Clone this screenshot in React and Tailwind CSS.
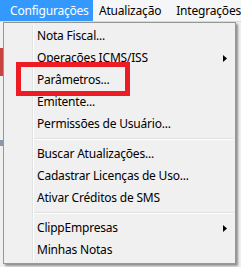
const items = [
  { label: "Nota Fiscal..." },
  { label: "Operações ICMS/ISS", sub: true },
  { label: "Parâmetros..." },
  { label: "Emitente..." },
  { label: "Permissões de Usuário..." },
  { sep: true },
  { label: "Buscar Atualizações..." },
  { label: "Cadastrar Licenças de Uso..." },
  { label: "Ativar Créditos de SMS" },
  { sep: true },
  { label: "ClippEmpresas", sub: true },
  { label: "Minhas Notas" },
];

const Arrow = () => (
  <svg width="4" height="7" viewBox="0 0 4 7" className="ml-auto mr-[8px]">
    <path d="M0 0 L4 3.5 L0 7 Z" fill="#000" />
  </svg>
);

export default function App() {
  return (
    <div
      className="relative w-[241px] h-[267px] overflow-hidden bg-[#f0f0f0] text-[12px] tracking-[-0.2px] text-black"
      style={{ fontFamily: '"Noto Sans", "Liberation Sans", sans-serif' }}
    >
      {/* menu bar */}
      <div className="flex h-[21px] items-center bg-[#f5f6f7]">
        <div className="flex h-full w-[95px] items-center bg-[#3399ff] pl-[10px] text-white">
          Configurações
        </div>
        <div className="pl-[6px]">Atualização</div>
        <div className="pl-[15px] whitespace-nowrap">Integrações</div>
      </div>
      <div className="h-px bg-[#d9d9d9]" />

      {/* window content peeking behind */}
      <div className="absolute left-0 top-[48px] h-[28px] w-[3px] bg-[#c8443f]" />
      <div className="absolute left-0 top-[140px] h-[6px] w-[3px] bg-[#8a99a8]" />

      {/* dropdown */}
      <div className="absolute left-[3px] top-[22px] w-[233px] border border-[#979797] bg-[#f0f0f0] py-[2px] shadow-[2px_2px_2px_rgba(0,0,0,0.4)]">
        <div className="absolute bottom-[2px] left-[28px] top-[2px] w-px bg-[#e2e3e3]" />
        <div className="absolute bottom-[2px] left-[29px] top-[2px] w-px bg-white" />
        {items.map((it, i) =>
          it.sep ? (
            <div key={i} className="flex h-[8px] flex-col justify-center pl-[30px] pr-[1px]">
              <div className="h-px bg-[#e0e0e0]" />
              <div className="h-px bg-white" />
            </div>
          ) : (
            <div key={i} className="relative flex h-[22px] items-center pl-[33px]">
              <span>{it.label}</span>
              {it.sub && <Arrow />}
            </div>
          )
        )}
      </div>

      {/* red annotation box */}
      <div className="absolute left-[16px] top-[62px] h-[34px] w-[114px] border-[5px] border-[#ed1c24]" />
    </div>
  );
}
